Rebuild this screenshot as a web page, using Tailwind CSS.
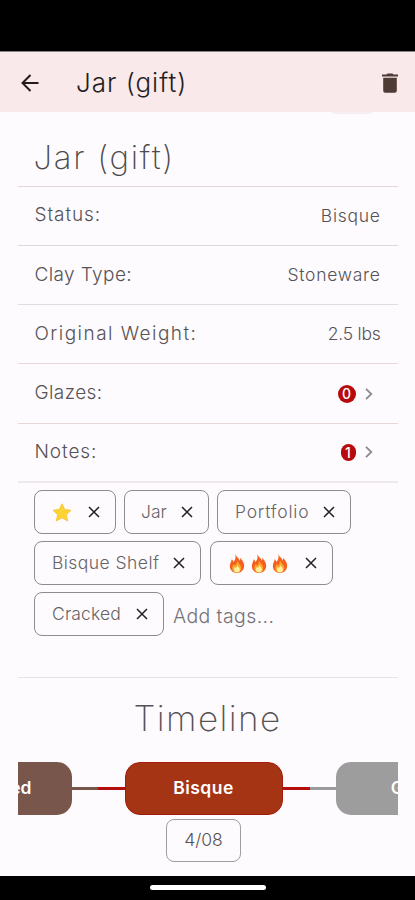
<!DOCTYPE html>
<html lang="en">
<head>
<meta charset="utf-8">
<title>Jar (gift)</title>
<script src="https://cdn.jsdelivr.net/npm/@tailwindcss/browser@4"></script>
</head>
<body class="h-[900px] w-[415px] overflow-hidden bg-[#fefbfe] font-['Inter',sans-serif] font-light text-[#565356]">
<svg class="hidden">
  <symbol id="x" viewBox="0 0 12 12"><path d="M1 1l10 10M11 1L1 11" stroke="#222" stroke-width="1.5" fill="none"/></symbol>
  <symbol id="chev" viewBox="0 0 8 12"><path d="M1 .8L6.3 6 1 11.2" stroke="#8d898d" stroke-width="1.8" fill="none"/></symbol>
  <symbol id="fire" viewBox="0 0 16 20"><path d="M6 0c1 3 4 4 5 7 .5-1 .4-2 0-3 3 2.500 5 6 4.500 9.500C15 17.500 12 20 8 20S.8 17.500.5 13.500C.3 10 2 8 2.500 5.500c1 .7 1.600 1.700 1.700 3C6.500 6 7 3 6 0z" fill="#f4601f"/><path d="M8 6c0 3 4.500 4.500 4.500 9 0 3-2 4.500-4.500 4.500S3 18 3 15c0-2 1-3 1.500-4.500.8.6 1.200 1.300 1.300 2C7.500 10.500 8 8.500 8 6z" fill="#fda62b"/><path d="M8.500 11c0 2 2.500 3 2.500 5.200 0 2-1.300 3-3 3s-3.200-1-3.200-3c0-1 .6-2 1.200-2.700.3.500.6.900.7 1.300C8 13.800 8.500 12.500 8.500 11z" fill="#fff0a0"/></symbol>
</svg>
<div class="flex h-full flex-col">
  <div class="h-[52px] shrink-0 border-b border-[#8b8585] bg-black"></div>
  <header class="flex h-[60px] shrink-0 items-center bg-[#f9e9eb] pt-px pr-[17px] pl-[21px] text-[#241d1f]">
    <svg class="h-[18px] w-[18px]" viewBox="0 0 18 18" fill="none" stroke="#241b1d" stroke-width="2"><path d="M17.500 9H2M9.500 1L1.500 9l8 8"/></svg>
    <h1 class="ml-[37px] text-[26px] leading-[30px] tracking-[1px] whitespace-nowrap">Jar (gift)</h1>
    <svg class="ml-auto h-[20px] w-[16px]" viewBox="0 0 16 20" fill="#4e3b35"><path d="M0 1.500h4.500L5.500.4h5l1 1.100H16v2H0zM1.200 4.700h13.600v13q0 2-2 2H3.200q-2 0-2-2z"/></svg>
  </header>
  <main class="flex h-[764px] shrink-0 flex-col px-[17.500px]">
    <div class="ml-auto mr-[26px] h-[2px] w-[40px] shrink-0 rounded-b-full bg-[#f5eff3]"></div>
    <div class="flex h-[72.500px] shrink-0 items-end border-b-[1.500px] border-[#e6d6d7] pb-[9px] pl-[16px]">
      <h2 class="text-[33px] font-extralight leading-[40px] tracking-[1.700px] whitespace-nowrap text-[#4c4a4c]">Jar (gift)</h2>
    </div>
    <div class="flex h-[59.300px] shrink-0 items-center justify-between border-b-[1.500px] border-[#dfd8dc] px-[17px]"><span class="text-[19px] tracking-[0.900px]">Status:</span><span class="text-[17.500px] tracking-[0.700px]">Bisque</span></div>
    <div class="flex h-[59.300px] shrink-0 items-center justify-between border-b-[1.500px] border-[#e3dcdf] px-[17px]"><span class="text-[19px] tracking-[0.400px]">Clay Type:</span><span class="text-[17.500px] tracking-[0.700px]">Stoneware</span></div>
    <div class="flex h-[59.300px] shrink-0 items-center justify-between border-b-[1.500px] border-[#ead6d7] px-[17px]"><span class="text-[19px] tracking-[1.450px]">Original Weight:</span><span class="text-[17.500px] tracking-[-0.250px]">2.5 lbs</span></div>
    <div class="flex h-[59.300px] shrink-0 items-center justify-between border-b-[1.500px] border-[#ead6d7] pr-[25px] pl-[17px]"><span class="text-[19px] tracking-[0.400px]">Glazes:</span><span class="flex items-center"><b class="flex h-[18px] w-[18px] items-center justify-center rounded-full bg-[#b70a0d] text-[14px] font-medium text-white">0</b><svg class="ml-[9px] h-[12px] w-[8px]"><use href="#chev"/></svg></span></div>
    <div class="flex h-[59.300px] shrink-0 items-center justify-between border-b-2 border-[#eee8ec] pr-[25px] pl-[17px]"><span class="text-[19px] tracking-[0.900px]">Notes:</span><span class="flex items-center"><b class="flex h-[17px] w-[15px] items-center justify-center rounded-full bg-[#b70a0d] text-[14px] font-medium text-white">1</b><svg class="ml-[9px] h-[12px] w-[8px]"><use href="#chev"/></svg></span></div>

    <div class="flex h-[195px] shrink-0 flex-col gap-[7px] border-b-[1.500px] border-[#ebe2e5] pt-[7.500px] pl-[16.500px] text-[17.500px] text-[#666366]">
      <div class="flex h-[44px] shrink-0 gap-[8px]">
        <div class="flex w-[82px] items-center justify-between rounded-[8px] border border-[#938a8c] pr-[15px] pl-[17px]"><svg class="h-[19px] w-[20px]" viewBox="0 0 20 19"><path d="M10 .8l2.700 5.700 6.300.8-4.600 4.300 1.200 6.300L10 14.800l-5.600 3.100 1.200-6.300L1 7.300l6.300-.8z" fill="#fdd436" stroke="#f8c638" stroke-linejoin="round"/></svg><svg class="h-[12px] w-[12px]"><use href="#x"/></svg></div>
        <div class="flex w-[85px] items-center justify-between rounded-[8px] border border-[#938a8c] pr-[15px] pl-[16px]"><span>Jar</span><svg class="h-[12px] w-[12px]"><use href="#x"/></svg></div>
        <div class="flex w-[134px] items-center justify-between rounded-[8px] border border-[#938a8c] pr-[15px] pl-[17px]"><span class="tracking-[0.800px]">Portfolio</span><svg class="h-[12px] w-[12px]"><use href="#x"/></svg></div>
      </div>
      <div class="flex h-[44px] shrink-0 gap-[9px]">
        <div class="flex w-[167px] items-center justify-between rounded-[8px] border border-[#938a8c] pr-[15px] pl-[17px]"><span class="tracking-[0.450px]">Bisque Shelf</span><svg class="h-[12px] w-[12px]"><use href="#x"/></svg></div>
        <div class="flex w-[123px] items-center justify-between rounded-[8px] border border-[#938a8c] pr-[15px] pl-[18px]"><span class="flex gap-[5.500px]"><svg class="h-[19px] w-[16px]"><use href="#fire"/></svg><svg class="h-[19px] w-[16px]"><use href="#fire"/></svg><svg class="h-[19px] w-[16px]"><use href="#fire"/></svg></span><svg class="h-[12px] w-[12px]"><use href="#x"/></svg></div>
      </div>
      <div class="flex h-[44px] shrink-0 gap-[9px]">
        <div class="flex w-[130px] items-center justify-between rounded-[8px] border border-[#938a8c] pr-[15px] pl-[17px]"><span class="tracking-[0.150px]">Cracked</span><svg class="h-[12px] w-[12px]"><use href="#x"/></svg></div>
        <span class="pt-[10px] text-[19.500px] tracking-[0.400px] whitespace-nowrap text-[#757275]">Add tags...</span>
      </div>
    </div>

    <h2 class="mt-[18px] h-[44px] shrink-0 text-center text-[35px] font-extralight leading-[44px] tracking-[1.400px]">Timeline</h2>
    <div class="mt-[22px] flex h-[53px] shrink-0 items-center justify-center overflow-hidden pr-[8px] text-[17.500px] font-semibold text-white">
      <div class="flex h-full w-[158px] shrink-0 items-center justify-center rounded-[15px] bg-[#79564b] pl-[3px]">Trimmed</div>
      <div class="h-[3px] w-[26px] shrink-0 bg-[#79564b]"></div><div class="h-[3px] w-[27px] shrink-0 bg-[#b30d0d]"></div>
      <div class="flex h-full w-[158px] shrink-0 items-center justify-center rounded-[15px] border border-[#a61b0c] bg-[#a43414] tracking-[0.500px]">Bisque</div>
      <div class="h-[3px] w-[27px] shrink-0 bg-[#b30d0d]"></div><div class="h-[3px] w-[26px] shrink-0 bg-[#9b9b9b]"></div>
      <div class="flex h-full w-[158px] shrink-0 items-center justify-center rounded-[15px] bg-[#9d9d9d]">Glaze</div>
    </div>
    <div class="mt-[4px] ml-[148.500px] flex h-[43px] w-[75px] shrink-0 items-center justify-center rounded-[8px] border border-[#a39b9c] text-[17.500px]">4/08</div>
  </main>
  <footer class="flex flex-1 justify-center bg-black pt-[9px]"><div class="h-[5px] w-[116px] rounded-full bg-white"></div></footer>
</div>
</body>
</html>
